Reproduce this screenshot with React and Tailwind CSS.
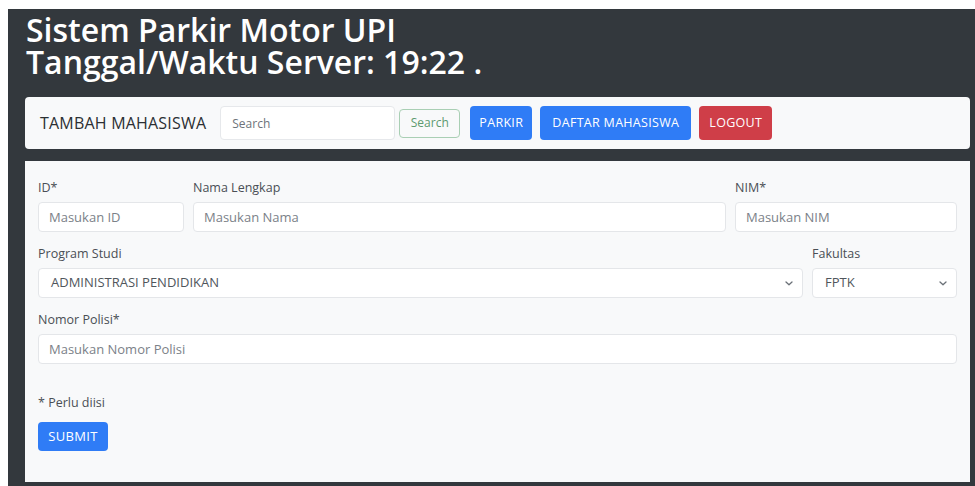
import React from "react";

const font = { fontFamily: '"Open Sans", "Noto Sans", sans-serif' };

function Field({ label, placeholder, className = "" }) {
  return (
    <div className={`flex flex-col ${className}`}>
      <label className="mb-[6px] text-[12.5px] leading-[16px] text-[#4a4f55]">{label}</label>
      <input
        placeholder={placeholder}
        className="h-[30px] w-full rounded-[4px] border border-[#e4e6e9] bg-white px-[10px] text-[13px] text-[#212529] outline-none placeholder:text-[#7b8188]"
      />
    </div>
  );
}

function Select({ label, value, className = "" }) {
  return (
    <div className={`flex flex-col ${className}`}>
      <label className="mb-[6px] text-[12.5px] leading-[16px] text-[#4a4f55]">{label}</label>
      <div className="flex h-[30px] w-full items-center justify-between rounded-[4px] border border-[#e4e6e9] bg-white pl-[12px] pr-[9px]">
        <span className="text-[13px] text-[#50565c]">{value}</span>
        <svg width="8" height="5" viewBox="0 0 8 5" fill="none">
          <path d="M1 1l3 2.8L7 1" stroke="#6a7077" strokeWidth="1.3" strokeLinecap="round" strokeLinejoin="round" />
        </svg>
      </div>
    </div>
  );
}

export default function App() {
  return (
    <div className="h-[486px] bg-white pl-[8px] pt-[9px]" style={font}>
      <div className="flex h-full flex-col bg-[#33383d] pl-[17px] pr-[5px]">
        <h1 className="pl-[1px] pt-[5px] text-[32px] font-semibold leading-[32px] text-white">
          <div>Sistem Parkir Motor UPI</div>
          <div>Tanggal/Waktu Server: 19:22 .</div>
        </h1>

        <nav className="mt-[19px] flex h-[52px] items-center rounded-[4px] bg-[#f8f9fa] pl-[15px]">
          <span className="text-[16px] tracking-[0.2px] text-[#2b2f33]">TAMBAH MAHASISWA</span>
          <input
            placeholder="Search"
            className="ml-[14px] h-[34px] w-[175px] rounded-[4px] border border-[#e6e8eb] bg-white px-[11px] text-[12px] outline-none placeholder:text-[#6d737a]"
          />
          <button className="ml-[4px] h-[29px] w-[61px] rounded-[4px] border border-[#a9cfb4] text-[12px] text-[#5c9a6f]">
            Search
          </button>
          <button className="ml-[10px] h-[34px] w-[62px] rounded-[4px] bg-[#2f7cf6] text-[12.5px] tracking-[0.3px] text-white">
            PARKIR
          </button>
          <button className="ml-[8px] h-[34px] w-[151px] rounded-[4px] bg-[#2f7cf6] text-[12.5px] tracking-[0.3px] text-white">
            DAFTAR MAHASISWA
          </button>
          <button className="ml-[8px] h-[34px] w-[73px] rounded-[4px] bg-[#cf3e48] text-[12.5px] tracking-[0.3px] text-white">
            LOGOUT
          </button>
        </nav>

        <form className="mb-[4px] mt-[12px] flex flex-1 flex-col bg-[#f8f9fa] px-[13px] pt-[19px]">
          <div className="flex gap-[9px]">
            <Field label="ID*" placeholder="Masukan ID" className="w-[146px]" />
            <Field label="Nama Lengkap" placeholder="Masukan Nama" className="flex-1" />
            <Field label="NIM*" placeholder="Masukan NIM" className="w-[222px]" />
          </div>
          <div className="mt-[14px] flex gap-[9px]">
            <Select label="Program Studi" value="ADMINISTRASI PENDIDIKAN" className="flex-1" />
            <Select label="Fakultas" value="FPTK" className="w-[145px]" />
          </div>
          <div className="mt-[14px]">
            <Field label="Nomor Polisi*" placeholder="Masukan Nomor Polisi" />
          </div>
          <p className="mt-[32px] text-[12.5px] leading-[14px] text-[#4a4f55]">* Perlu diisi</p>
          <button
            type="button"
            className="mt-[12px] h-[29px] w-[70px] rounded-[4px] bg-[#2f7cf6] text-[13px] tracking-[0.3px] text-white"
          >
            SUBMIT
          </button>
        </form>
      </div>
    </div>
  );
}
